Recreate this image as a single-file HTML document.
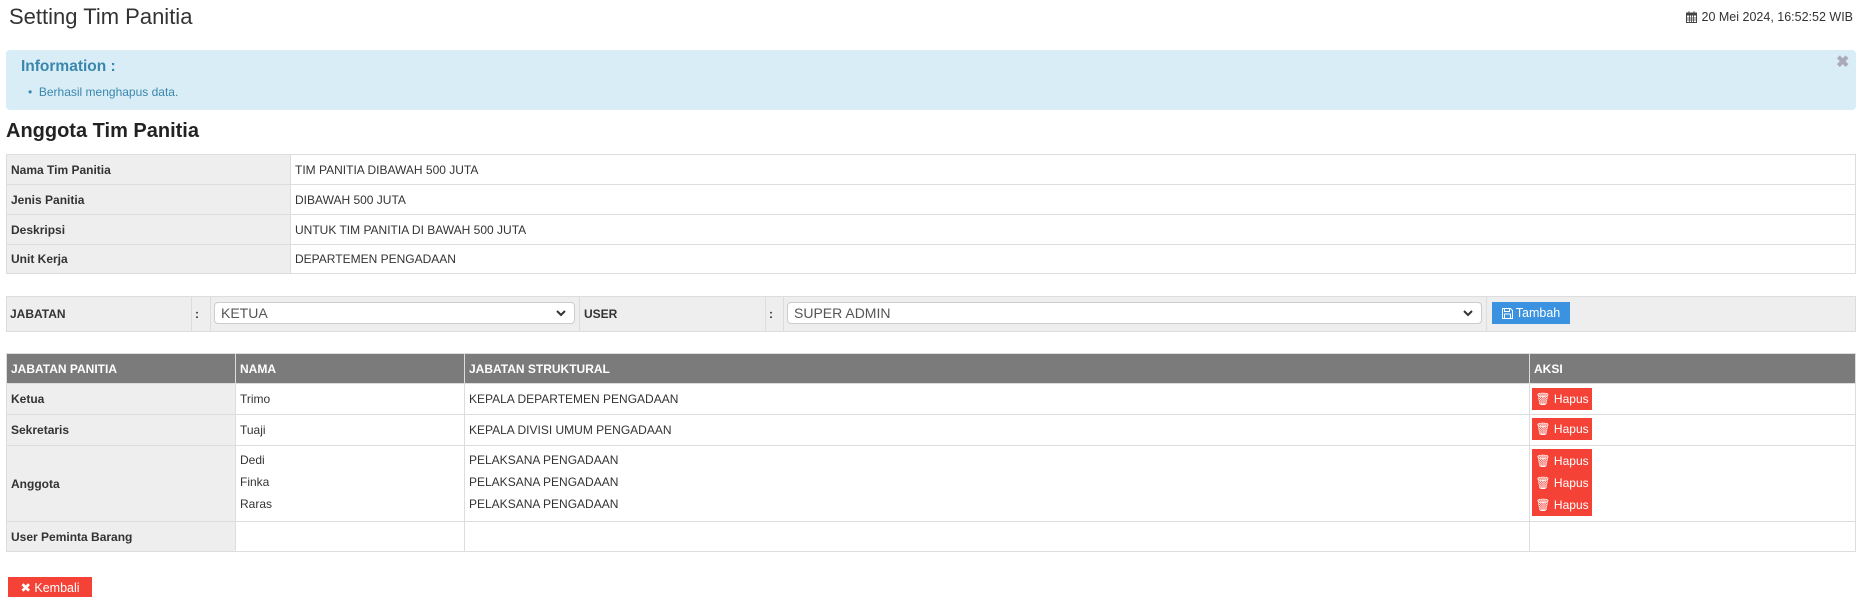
<!DOCTYPE html>
<html><head><meta charset="utf-8"><style>
*{box-sizing:border-box;margin:0;padding:0}
body{width:1864px;height:601px;background:#fff;font-family:"Liberation Sans",Arial,sans-serif;color:#333;position:relative;overflow:hidden;font-size:12px}
.a{position:absolute}
.c{position:absolute;border:1px solid #ddd;display:flex;align-items:center;padding-left:4px;white-space:nowrap}
.g{background:#eee}
.b{font-weight:bold}
.h{background:#7b7b7b;color:#fff;font-weight:bold;border-color:#ddd}
.btn{position:absolute;background:#f44336;color:#fff;font-size:12px;display:flex;align-items:center;justify-content:center;height:22px}
.sel{position:absolute;background:#fff;border:1px solid #ccc;border-radius:4px;height:22px;font-size:14px;color:#555;display:flex;align-items:center;padding-left:6px}
.sel svg{position:absolute;right:8px;top:7px}
</style></head><body>
<div class="a" style="left:9px;top:4px;font-size:22px;color:#333">Setting Tim Panitia</div>
<div class="a" style="right:11px;top:10px;font-size:12.5px;color:#333;display:flex;align-items:center;gap:5px">
<svg width="11" height="12" viewBox="0 0 11 12"><rect x="0.5" y="2" width="10" height="9.5" fill="none" stroke="#444"/><rect x="0.5" y="2" width="10" height="2.5" fill="#444"/><path d="M3 0v3M8 0v3M0.5 7h10M0.5 9h10M3.5 4.5v7M5.5 4.5v7M7.5 4.5v7" stroke="#444" stroke-width="0.8"/></svg>20 Mei 2024, 16:52:52 WIB</div>
<div class="a" style="left:6px;top:50px;width:1850px;height:60px;background:#d9edf7;border-radius:4px"></div>
<div class="a" style="left:21px;top:58px;font-size:15.5px;font-weight:bold;color:#3a87ad">Information :</div>
<div class="a" style="left:1836px;top:52px;font-size:16px;font-weight:bold;color:#aab">&#10006;</div>
<div class="a" style="left:28px;top:85px;font-size:12px;color:#3a87ad">•&nbsp;&nbsp;Berhasil menghapus data.</div>
<div class="a" style="left:6px;top:120px;font-size:20px;font-weight:bold;color:#222">Anggota Tim Panitia</div>

<div class="c g b" style="left:6px;top:154px;width:285px;height:31px">Nama Tim Panitia</div>
<div class="c" style="left:290px;top:154px;width:1566px;height:31px">TIM PANITIA DIBAWAH 500 JUTA</div>
<div class="c g b" style="left:6px;top:184px;width:285px;height:31px">Jenis Panitia</div>
<div class="c" style="left:290px;top:184px;width:1566px;height:31px">DIBAWAH 500 JUTA</div>
<div class="c g b" style="left:6px;top:214px;width:285px;height:31px">Deskripsi</div>
<div class="c" style="left:290px;top:214px;width:1566px;height:31px">UNTUK TIM PANITIA DI BAWAH 500 JUTA</div>
<div class="c g b" style="left:6px;top:244px;width:285px;height:30px">Unit Kerja</div>
<div class="c" style="left:290px;top:244px;width:1566px;height:30px">DEPARTEMEN PENGADAAN</div>

<div class="a g" style="left:6px;top:296px;width:1850px;height:36px;border:1px solid #ddd"></div>
<div class="a" style="left:191px;top:297px;width:1px;height:34px;background:#ddd"></div>
<div class="a" style="left:210px;top:297px;width:1px;height:34px;background:#ddd"></div>
<div class="a" style="left:579px;top:297px;width:1px;height:34px;background:#ddd"></div>
<div class="a" style="left:765px;top:297px;width:1px;height:34px;background:#ddd"></div>
<div class="a" style="left:783px;top:297px;width:1px;height:34px;background:#ddd"></div>
<div class="a" style="left:1486px;top:297px;width:1px;height:34px;background:#ddd"></div>
<div class="a b" style="left:10px;top:307px">JABATAN</div>
<div class="a b" style="left:195px;top:307px">:</div>
<div class="sel" style="left:214px;top:302px;width:361px">KETUA<svg width="10" height="7" viewBox="0 0 10 7"><path d="M1 1l4 4 4-4" fill="none" stroke="#333" stroke-width="2"/></svg></div>
<div class="a b" style="left:584px;top:307px">USER</div>
<div class="a b" style="left:769px;top:307px">:</div>
<div class="sel" style="left:787px;top:302px;width:695px">SUPER ADMIN<svg width="10" height="7" viewBox="0 0 10 7"><path d="M1 1l4 4 4-4" fill="none" stroke="#333" stroke-width="2"/></svg></div>
<div class="a" style="left:1492px;top:302px;width:78px;height:22px;background:#3a92e0;color:#fff;display:flex;align-items:center;justify-content:center;gap:3px;font-size:12.5px"><svg width="11" height="11" viewBox="0 0 11 11"><path d="M0.5 0.5h8l2 2v8h-10z" fill="none" stroke="#fff"/><rect x="2.5" y="0.5" width="5" height="3" fill="none" stroke="#fff"/><rect x="2.5" y="6" width="6" height="4.5" fill="none" stroke="#fff"/></svg>Tambah</div>

<div class="c h" style="left:6px;top:353px;width:230px;height:31px">JABATAN PANITIA</div>
<div class="c h" style="left:235px;top:353px;width:230px;height:31px">NAMA</div>
<div class="c h" style="left:464px;top:353px;width:1066px;height:31px">JABATAN STRUKTURAL</div>
<div class="c h" style="left:1529px;top:353px;width:327px;height:31px">AKSI</div>

<div class="c g b" style="left:6px;top:383px;width:230px;height:32px">Ketua</div>
<div class="c" style="left:235px;top:383px;width:230px;height:32px">Trimo</div>
<div class="c" style="left:464px;top:383px;width:1066px;height:32px">KEPALA DEPARTEMEN PENGADAAN</div>
<div class="c" style="left:1529px;top:383px;width:327px;height:32px"></div>
<div class="c g b" style="left:6px;top:414px;width:230px;height:32px">Sekretaris</div>
<div class="c" style="left:235px;top:414px;width:230px;height:32px">Tuaji</div>
<div class="c" style="left:464px;top:414px;width:1066px;height:32px">KEPALA DIVISI UMUM PENGADAAN</div>
<div class="c" style="left:1529px;top:414px;width:327px;height:32px"></div>
<div class="c g b" style="left:6px;top:445px;width:230px;height:77px">Anggota</div>
<div class="c" style="left:235px;top:445px;width:230px;height:77px;display:block;padding-top:3px;line-height:22px">Dedi<br>Finka<br>Raras</div>
<div class="c" style="left:464px;top:445px;width:1066px;height:77px;display:block;padding-top:3px;line-height:22px">PELAKSANA PENGADAAN<br>PELAKSANA PENGADAAN<br>PELAKSANA PENGADAAN</div>
<div class="c" style="left:1529px;top:445px;width:327px;height:77px"></div>
<div class="c g b" style="left:6px;top:521px;width:230px;height:31px">User Peminta Barang</div>
<div class="c" style="left:235px;top:521px;width:230px;height:31px"></div>
<div class="c" style="left:464px;top:521px;width:1066px;height:31px"></div>
<div class="c" style="left:1529px;top:521px;width:327px;height:31px"></div>

<div class="btn" style="left:1532px;top:388px;width:60px">&#128465;&#xFE0E; Hapus</div>
<div class="btn" style="left:1532px;top:418px;width:60px">&#128465;&#xFE0E; Hapus</div>
<div class="btn" style="left:1532px;top:449px;width:60px;height:67px;flex-direction:column;line-height:22px">
<span>&#128465;&#xFE0E; Hapus</span><span>&#128465;&#xFE0E; Hapus</span><span>&#128465;&#xFE0E; Hapus</span></div>

<div class="btn" style="left:8px;top:577px;width:84px;height:20px;font-size:12.5px">&#10006; Kembali</div>
</body></html>
